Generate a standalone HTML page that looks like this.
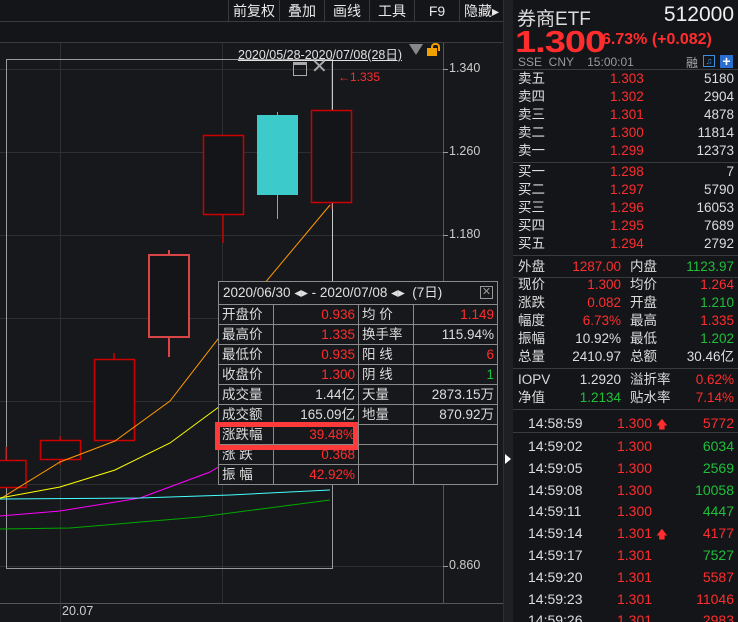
<!DOCTYPE html><html><head><meta charset="utf-8"><style>
*{margin:0;padding:0;box-sizing:border-box}
html,body{width:738px;height:622px;overflow:hidden}
body{background:#17181b;position:relative;font-family:"Liberation Sans","Noto Sans CJK SC",sans-serif;color:#ddd;font-size:13px}
.a{position:absolute;white-space:nowrap}
.r{color:#ff2d2d}.g{color:#1fbf3a}.w{color:#e8e8e8}
.tb{position:absolute;top:0;height:22px;border-left:1px solid #3a3b3f;color:#e8e8e8;font-size:14px;text-align:center;line-height:22px}
.row{position:absolute;left:513px;width:225px;height:18px;font-size:13.5px;line-height:18px}
.row span{position:absolute}
table{border-collapse:collapse;position:absolute;left:218px;top:304px;font-size:13.5px}
td{border:1px solid #8a8a8a;height:20px;padding:0 3px;line-height:18px;white-space:nowrap}
.tk{position:absolute;left:513px;width:225px;height:22px;font-size:14px;line-height:22px}
.tk span{position:absolute}
</style></head><body>
<div class="a" style="left:0;top:0;width:503px;height:22px;background:#141519;border-bottom:1px solid #3a3b3f"></div>
<div class="tb" style="left:228px;width:51px">前复权</div>
<div class="tb" style="left:279px;width:45px">叠加</div>
<div class="tb" style="left:324px;width:45px">画线</div>
<div class="tb" style="left:369px;width:45px">工具</div>
<div class="tb" style="left:414px;width:45px">F9</div>
<div class="tb" style="left:459px;width:44px">隐藏▸</div>
<div class="a" style="left:0;top:22px;width:503px;height:21px;background:#141519;border-bottom:1px solid #3a3b3f"></div>
<svg class="a" style="left:0;top:43px" width="503" height="579">
<rect x="0" y="0" width="503" height="579" fill="#17181b"/>
<g stroke="#2e2f31" stroke-width="1">
<line x1="0" y1="26.5" x2="443" y2="26.5"/><line x1="0" y1="109.5" x2="443" y2="109.5"/><line x1="0" y1="192.5" x2="443" y2="192.5"/><line x1="0" y1="275.5" x2="443" y2="275.5"/><line x1="0" y1="358.5" x2="443" y2="358.5"/><line x1="0" y1="441.5" x2="443" y2="441.5"/><line x1="0" y1="523.5" x2="443" y2="523.5"/>
<line x1="60.5" y1="0" x2="60.5" y2="579"/><line x1="222.5" y1="0" x2="222.5" y2="560"/>
</g>
<line x1="443.5" y1="0" x2="443.5" y2="560" stroke="#555"/>
<line x1="0" y1="560.5" x2="503" y2="560.5" stroke="#555"/>
<g stroke="#999"><line x1="443" y1="26.5" x2="448" y2="26.5"/><line x1="443" y1="109.5" x2="448" y2="109.5"/><line x1="443" y1="192.5" x2="448" y2="192.5"/><line x1="443" y1="523.5" x2="448" y2="523.5"/></g>
<rect x="6.5" y="16.5" width="326" height="509" fill="none" stroke="#9a9a9a"/>
<line x1="332.5" y1="16" x2="332.5" y2="240" stroke="#c8c8c8"/>
<line x1="331.5" y1="20" x2="331.5" y2="67" stroke="#c00"/>
<g fill="#131519" stroke="#cc0000" stroke-width="1.5">
<line x1="223" y1="171" x2="223" y2="200"/><rect x="203.5" y="92.5" width="40" height="79"/>
<line x1="331.5" y1="159" x2="331.5" y2="166"/><rect x="311.5" y="67.5" width="40" height="92"/>
<line x1="114" y1="310" x2="114" y2="316"/><rect x="94.5" y="316.5" width="40" height="81"/>
<line x1="60" y1="393" x2="60" y2="398"/><line x1="60" y1="416" x2="60" y2="422"/><rect x="40.5" y="397.5" width="40" height="19"/>
<line x1="6" y1="404" x2="6" y2="417"/><rect x="-14" y="417.5" width="40" height="27"/>
</g>
<g stroke="#d94444" stroke-width="2" fill="#131519"><line x1="169" y1="207" x2="169" y2="212"/><line x1="169" y1="294" x2="169" y2="314"/><rect x="149" y="212" width="40" height="82"/></g>
<line x1="277.5" y1="69" x2="277.5" y2="176" stroke="#3cc"/>
<rect x="257" y="72" width="41" height="80" fill="#3ccaca"/>
<polyline fill="none" stroke="#ff9900" points="0,456 60,419 115,398 170,358 218,296 330,162"/>
<polyline fill="none" stroke="#ffff00" points="0,455 60,444 115,427 170,400 235,352"/>
<polyline fill="none" stroke="#ff00ff" points="0,473 60,468 140,455 210,429 225,420"/>
<polyline fill="none" stroke="#44ffff" points="0,456 140,455 230,452 330,447"/>
<polyline fill="none" stroke="#00aa00" points="0,486 70,485 200,474 330,457"/>
</svg>
<div class="a" style="left:238px;top:44px;font-size:12.5px;color:#e0e0e0;text-decoration:underline">2020/05/28-2020/07/08(28日)</div>
<div class="a" style="left:409px;top:44px;width:0;height:0;border-left:7px solid transparent;border-right:7px solid transparent;border-top:11px solid #888"></div>
<div class="a" style="left:427px;top:48px;width:10px;height:8px;background:#f0a000"></div>
<div class="a" style="top:43px;width:9px;height:8px;border:2px solid #f0a000;border-bottom:none;border-radius:4px 4px 0 0;left:431px"></div>
<div class="a" style="left:293px;top:62px;width:14px;height:14px;border:1px solid #aaa;border-top-width:3px"></div>
<div class="a" style="left:311px;top:56px;font-size:20px;color:#aaa;line-height:22px">✕</div>
<div class="a r" style="left:338px;top:70px;font-size:12px">←1.335</div>
<div class="a" style="left:449px;top:61px;font-size:12.5px;color:#ccc">1.340</div>
<div class="a" style="left:449px;top:144px;font-size:12.5px;color:#ccc">1.260</div>
<div class="a" style="left:449px;top:227px;font-size:12.5px;color:#ccc">1.180</div>
<div class="a" style="left:449px;top:558px;font-size:12.5px;color:#ccc">0.860</div>
<div class="a" style="left:62px;top:604px;font-size:12.5px;color:#ccc">20.07</div>
<div class="a" style="left:218px;top:281px;width:280px;height:24px;background:#17181b;border:1px solid #8a8a8a;font-size:13.5px;line-height:22px;padding-left:4px;color:#e0e0e0">2020/06/30 ◂▸ - 2020/07/08 ◂▸ &nbsp;(7日)<span style="position:absolute;right:4px;top:4px;width:13px;height:13px;border:1px solid #999;font-size:11px;line-height:11px;text-align:center;color:#999">✕</span></div>
<table style="background:#17181b">
<tr><td style="width:55px">开盘价</td><td class="r" style="width:85px;text-align:right">0.936</td><td style="width:55px">均 价</td><td class="r" style="width:84px;text-align:right">1.149</td></tr>
<tr><td>最高价</td><td class="r" style="text-align:right">1.335</td><td>换手率</td><td style="text-align:right">115.94%</td></tr>
<tr><td>最低价</td><td class="r" style="text-align:right">0.935</td><td>阳 线</td><td class="r" style="text-align:right">6</td></tr>
<tr><td>收盘价</td><td class="r" style="text-align:right">1.300</td><td>阴 线</td><td class="g" style="text-align:right">1</td></tr>
<tr><td>成交量</td><td style="text-align:right">1.44亿</td><td>天量</td><td style="text-align:right">2873.15万</td></tr>
<tr><td>成交额</td><td style="text-align:right">165.09亿</td><td>地量</td><td style="text-align:right">870.92万</td></tr>
<tr><td>涨跌幅</td><td class="r" style="text-align:right">39.48%</td><td></td><td></td></tr>
<tr><td>涨 跌</td><td class="r" style="text-align:right">0.368</td><td></td><td></td></tr>
<tr><td>振 幅</td><td class="r" style="text-align:right">42.92%</td><td></td><td></td></tr>
</table>
<div class="a" style="left:215px;top:422px;width:143px;height:28px;border:5px solid #ff3a3a"></div>
<div class="a" style="left:503px;top:0;width:10px;height:622px;background:#1f2024;border-left:1px solid #2e2f33"></div>
<div class="a" style="left:505px;top:454px;width:0;height:0;border-top:5px solid transparent;border-bottom:5px solid transparent;border-left:6px solid #fff"></div>
<div class="a" style="left:513px;top:0;width:225px;height:622px;background:#131519;overflow:hidden">
<div class="a" style="left:4px;top:4px;font-size:19px;color:#ddd">券商ETF</div>
<div class="a" style="right:4px;top:3px;font-size:21px;color:#eee">512000</div>
<div class="a r" style="left:2px;top:28px;font-size:38px;font-weight:bold;letter-spacing:-1px;line-height:36px;transform:scaleY(0.8);transform-origin:0 0">1.300</div>
<div class="a r" style="left:89px;top:31px;font-size:16px;font-weight:bold">6.73% (+0.082)</div>
<div class="a" style="left:5px;top:55px;font-size:12px;color:#999">SSE&nbsp; CNY &nbsp;&nbsp;&nbsp;15:00:01</div>
<div class="a" style="left:173px;top:54px;font-size:12px;color:#aaa">融</div>
<div class="a" style="left:190px;top:55px;width:12px;height:12px;border:1px solid #3a8fe0;font-size:9px;color:#3a8fe0;line-height:10px;text-align:center">♫</div>
<div class="a" style="left:207px;top:55px;width:13px;height:13px;background:#2a6fd0;color:#fff;font-size:14px;line-height:12px;text-align:center;font-weight:bold">+</div>
</div>
<div class="a" style="left:513px;top:69px;width:225px;height:1px;background:#3a3b3f"></div>
<div class="row" style="top:70px"><span style="left:5px">卖五</span><span class="r" style="left:97px">1.303</span><span style="right:4px">5180</span></div>
<div class="row" style="top:88px"><span style="left:5px">卖四</span><span class="r" style="left:97px">1.302</span><span style="right:4px">2904</span></div>
<div class="row" style="top:106px"><span style="left:5px">卖三</span><span class="r" style="left:97px">1.301</span><span style="right:4px">4878</span></div>
<div class="row" style="top:124px"><span style="left:5px">卖二</span><span class="r" style="left:97px">1.300</span><span style="right:4px">11814</span></div>
<div class="row" style="top:142px"><span style="left:5px">卖一</span><span class="r" style="left:97px">1.299</span><span style="right:4px">12373</span></div>
<div class="a" style="left:513px;top:162px;width:225px;height:1px;background:#3a3b3f"></div>
<div class="row" style="top:163px"><span style="left:5px">买一</span><span class="r" style="left:97px">1.298</span><span style="right:4px">7</span></div>
<div class="row" style="top:181px"><span style="left:5px">买二</span><span class="r" style="left:97px">1.297</span><span style="right:4px">5790</span></div>
<div class="row" style="top:199px"><span style="left:5px">买三</span><span class="r" style="left:97px">1.296</span><span style="right:4px">16053</span></div>
<div class="row" style="top:217px"><span style="left:5px">买四</span><span class="r" style="left:97px">1.295</span><span style="right:4px">7689</span></div>
<div class="row" style="top:235px"><span style="left:5px">买五</span><span class="r" style="left:97px">1.294</span><span style="right:4px">2792</span></div>
<div class="a" style="left:513px;top:255px;width:225px;height:1px;background:#3a3b3f"></div>
<div class="row" style="top:258px"><span style="left:5px">外盘</span><span class="r" style="right:117px">1287.00</span><span style="left:117px">内盘</span><span class="g" style="right:4px">1123.97</span></div>
<div class="a" style="left:513px;top:277px;width:225px;height:1px;background:#3a3b3f"></div>
<div class="row" style="top:276px"><span style="left:5px">现价</span><span class="r" style="right:117px">1.300</span><span style="left:117px">均价</span><span class="r" style="right:4px">1.264</span></div>
<div class="row" style="top:294px"><span style="left:5px">涨跌</span><span class="r" style="right:117px">0.082</span><span style="left:117px">开盘</span><span class="g" style="right:4px">1.210</span></div>
<div class="row" style="top:312px"><span style="left:5px">幅度</span><span class="r" style="right:117px">6.73%</span><span style="left:117px">最高</span><span class="r" style="right:4px">1.335</span></div>
<div class="row" style="top:330px"><span style="left:5px">振幅</span><span style="right:117px">10.92%</span><span style="left:117px">最低</span><span class="g" style="right:4px">1.202</span></div>
<div class="row" style="top:348px"><span style="left:5px">总量</span><span style="right:117px">2410.97</span><span style="left:117px">总额</span><span style="right:4px">30.46亿</span></div>
<div class="a" style="left:513px;top:368px;width:225px;height:1px;background:#3a3b3f"></div>
<div class="row" style="top:371px"><span style="left:5px">IOPV</span><span style="right:117px">1.2920</span><span style="left:117px">溢折率</span><span class="r" style="right:4px">0.62%</span></div>
<div class="row" style="top:389px"><span style="left:5px">净值</span><span class="g" style="right:117px">1.2134</span><span style="left:117px">贴水率</span><span class="r" style="right:4px">7.14%</span></div>
<div class="a" style="left:513px;top:409px;width:225px;height:1px;background:#3a3b3f"></div>
<div class="tk" style="top:412px"><span style="left:15px">14:58:59</span><span class="r" style="left:104px">1.300 <small>🡅</small></span><span class="r" style="right:4px">5772</span></div>
<div class="a" style="left:513px;top:432px;width:225px;height:1px;background:#3a3b3f"></div>
<div class="tk" style="top:435px"><span style="left:15px">14:59:02</span><span class="r" style="left:104px">1.300</span><span class="g" style="right:4px">6034</span></div>
<div class="tk" style="top:457px"><span style="left:15px">14:59:05</span><span class="r" style="left:104px">1.300</span><span class="g" style="right:4px">2569</span></div>
<div class="tk" style="top:479px"><span style="left:15px">14:59:08</span><span class="r" style="left:104px">1.300</span><span class="g" style="right:4px">10058</span></div>
<div class="tk" style="top:500px"><span style="left:15px">14:59:11</span><span class="r" style="left:104px">1.300</span><span class="g" style="right:4px">4447</span></div>
<div class="tk" style="top:522px"><span style="left:15px">14:59:14</span><span class="r" style="left:104px">1.301 <small>🡅</small></span><span class="r" style="right:4px">4177</span></div>
<div class="tk" style="top:544px"><span style="left:15px">14:59:17</span><span class="r" style="left:104px">1.301</span><span class="g" style="right:4px">7527</span></div>
<div class="tk" style="top:566px"><span style="left:15px">14:59:20</span><span class="r" style="left:104px">1.301</span><span class="r" style="right:4px">5587</span></div>
<div class="tk" style="top:588px"><span style="left:15px">14:59:23</span><span class="r" style="left:104px">1.301</span><span class="r" style="right:4px">11046</span></div>
<div class="tk" style="top:609px;height:13px;overflow:hidden"><span style="left:15px">14:59:26</span><span class="r" style="left:104px">1.301</span><span class="r" style="right:4px">2983</span></div>
</body></html>
